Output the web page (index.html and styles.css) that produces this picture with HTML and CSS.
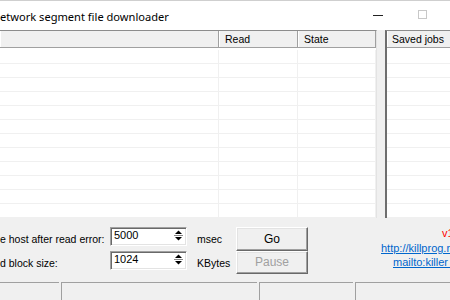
FILE: index.html
```html
<html>
<head>
  <title>Network segment file downloader</title>
  <meta charset="utf-8">
  <link rel="stylesheet" href="styles.css">
</head>
<body>
<div class="window">

  <div class="titlebar">
    <span class="title">etwork segment file downloader</span>
    <span class="min"></span>
    <span class="max"></span>
  </div>

  <div class="lists">
    <div class="jobs">
      <div class="head">
        <div class="hcell c1"></div>
        <div class="hcell c2">Read</div>
        <div class="hcell c3">State</div>
      </div>
      <div class="body">
        <div class="row"><span class="c1"></span><span class="c2"></span><span class="c3"></span></div>
        <div class="row"><span class="c1"></span><span class="c2"></span><span class="c3"></span></div>
        <div class="row"><span class="c1"></span><span class="c2"></span><span class="c3"></span></div>
        <div class="row"><span class="c1"></span><span class="c2"></span><span class="c3"></span></div>
        <div class="row"><span class="c1"></span><span class="c2"></span><span class="c3"></span></div>
        <div class="row"><span class="c1"></span><span class="c2"></span><span class="c3"></span></div>
        <div class="row"><span class="c1"></span><span class="c2"></span><span class="c3"></span></div>
        <div class="row"><span class="c1"></span><span class="c2"></span><span class="c3"></span></div>
        <div class="row"><span class="c1"></span><span class="c2"></span><span class="c3"></span></div>
        <div class="row"><span class="c1"></span><span class="c2"></span><span class="c3"></span></div>
        <div class="row"><span class="c1"></span><span class="c2"></span><span class="c3"></span></div>
        <div class="row"><span class="c1"></span><span class="c2"></span><span class="c3"></span></div>
      </div>
    </div>

    <div class="saved">
      <div class="head">
        <div class="hcell">Saved jobs</div>
      </div>
      <div class="body">
        <div class="row"></div><div class="row"></div><div class="row"></div>
        <div class="row"></div><div class="row"></div><div class="row"></div>
        <div class="row"></div><div class="row"></div><div class="row"></div>
        <div class="row"></div><div class="row"></div><div class="row"></div>
      </div>
    </div>
  </div>

  <div class="controls">
    <div class="label">e host after read error:</div>
    <div class="spin"><span class="val">5000</span><svg width="9" height="11" viewBox="0 0 9 11"><path d="M4.5 0.5 L8 4 L1 4 Z" fill="#000"/><rect x="0" y="5" width="9" height="1" fill="#888"/><path d="M1 7 L8 7 L4.5 10.5 Z" fill="#000"/></svg></div>
    <div class="unit">msec</div>
    <div class="buttons">
      <div class="btn">Go</div>
      <div class="btn disabled">Pause</div>
    </div>
    <div class="info">
      <div class="ver">v1.0</div>
      <a class="link url" href="#">http://killprog.ru</a>
      <a class="link mail" href="#">mailto:killer_</a>
    </div>

    <div class="label">d block size:</div>
    <div class="spin"><span class="val">1024</span><svg width="9" height="11" viewBox="0 0 9 11"><path d="M4.5 0.5 L8 4 L1 4 Z" fill="#000"/><rect x="0" y="5" width="9" height="1" fill="#888"/><path d="M1 7 L8 7 L4.5 10.5 Z" fill="#000"/></svg></div>
    <div class="unit">KBytes</div>
  </div>

  <div class="statusbar">
    <div class="pane p1"></div>
    <div class="pane p2"></div>
    <div class="pane p3"></div>
    <div class="pane p4"></div>
  </div>

</div>
</body>
</html>
```

FILE: styles.css
```css
* {
  box-sizing: border-box;
}

body {
  margin: 0;
  background: #f0f0f0;
  font-family: "Liberation Sans", Arial, sans-serif;
  font-size: 10.5px;
  color: #000;
}

.window {
  width: 450px;
  height: 300px;
  overflow: hidden;
  display: flex;
  flex-direction: column;
  background: #f0f0f0;
}

/* title bar */
.titlebar {
  flex: none;
  height: 30px;
  background: #fff;
  border-top: 1px solid #cfcfcf;
  display: flex;
  align-items: center;
  font-family: "Noto Sans", sans-serif;
  font-size: 11.1px;
}

.title {
  flex: 1;
  white-space: nowrap;
  padding-top: 2px;
}

.min {
  width: 10px;
  height: 1px;
  background: #222;
  margin-right: 35px;
}

.max {
  width: 9px;
  height: 9px;
  border: 1px solid #c8c8c8;
  margin-right: 23px;
  margin-bottom: 2px;
}

/* the two list views */
.lists {
  flex: none;
  height: 188px;
  display: flex;
  gap: 8px;
}

.jobs {
  width: 377px;
  background: #fff;
  border-top: 1px solid #8c8c8c;
  border-right: 1px solid #e3e3e3;
  overflow: hidden;
}

.saved {
  flex: 1;
  background: #fff;
  border-top: 1px solid #8c8c8c;
  border-left: 2px solid #6e6e6e;
  overflow: hidden;
}

.head {
  display: flex;
  height: 17px;
  background: #f0f0f0;
  border-bottom: 1px solid #a0a0a0;
}

.hcell {
  height: 16px;
  line-height: 17px;
  padding-left: 6px;
  white-space: nowrap;
  border-right: 1px solid #a0a0a0;
  box-shadow: inset 1px 0 0 #fff;
}

.saved .hcell {
  flex: 1;
  padding-left: 5px;
  border-right: none;
}

.c1 { width: 219px; }
.c2 { width: 79px; }
.c3 { width: 78px; }

.body {
  padding-top: 2px;
}

.row {
  display: flex;
  height: 14px;
  border-bottom: 1px solid #f0f0f0;
}

.row span {
  border-right: 1px solid #f0f0f0;
}

/* bottom controls */
.controls {
  flex: none;
  height: 64px;
  padding-top: 9px;
  display: grid;
  grid-template-columns: 110px 77px 49px 72px 1fr;
  grid-template-rows: 19px 19px;
  row-gap: 5px;
  white-space: nowrap;
}

.label {
  padding-top: 6px;
  overflow: hidden;
}

.spin {
  display: flex;
  align-items: flex-start;
  justify-content: space-between;
  background: #fff;
  border: 1px solid;
  border-color: #a0a0a0 #fff #fff #a0a0a0;
  box-shadow: inset 1px 1px 0 #696969, inset -1px -1px 0 #e3e3e3;
  padding: 1px 3px 0 3px;
  font-size: 11px;
}

.spin svg {
  margin-top: 1px;
}

.unit {
  padding-left: 10px;
  padding-top: 6px;
}

.buttons {
  grid-column: 4;
  grid-row: 1 / 3;
  height: 47px;
  display: flex;
  flex-direction: column;
}

.btn {
  flex: 1;
  display: flex;
  align-items: center;
  justify-content: center;
  background: #f0f0f0;
  font-size: 12px;
  border: 1px solid;
  border-color: #fff #696969 #696969 #fff;
  box-shadow: inset -1px -1px 0 #a0a0a0, inset 1px 1px 0 #e3e3e3;
}

.btn.disabled {
  color: #a0a0a0;
}

.info {
  grid-column: 5;
  grid-row: 1 / 3;
  padding-left: 73px;
  display: flex;
  flex-direction: column;
  overflow: hidden;
  font-size: 11px;
}

.ver {
  color: #f00;
  padding-left: 61px;
  height: 16px;
}

.link {
  color: #0066cc;
  text-decoration: underline;
  height: 15px;
}

.mail {
  padding-left: 12px;
}

/* status bar */
.statusbar {
  flex: none;
  height: 18px;
  display: flex;
  gap: 2px;
}

.pane {
  border-top: 1px solid #a0a0a0;
  border-left: 1px solid #a0a0a0;
}

.p1 { width: 59px; border-left: none; }
.p2 { width: 196px; }
.p3 { width: 94px; }
.p4 { flex: 1; }
```
